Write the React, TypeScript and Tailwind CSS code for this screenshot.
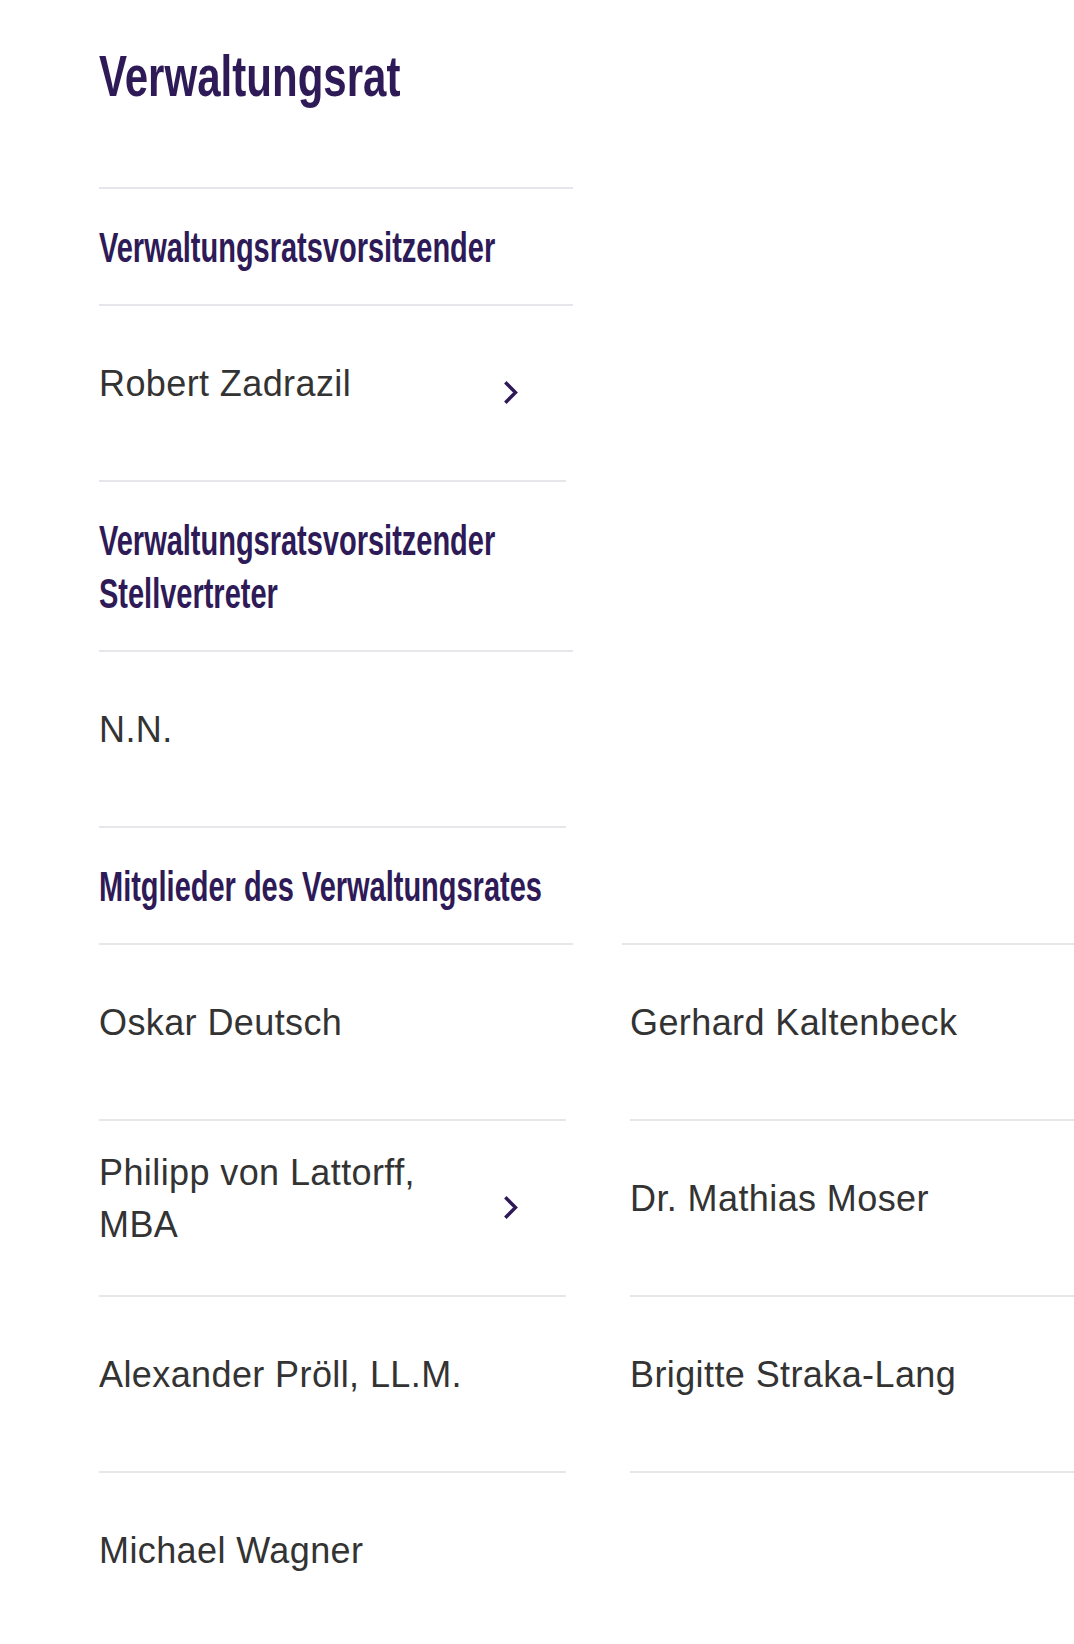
import React from "react";

type Person = { name: string; link?: boolean };

// no condensed face installed, so the bold sans is squeezed horizontally
const heading = "font-['Liberation_Sans',Arial,sans-serif] font-bold text-[#2e1a57]";

function Chevron() {
	return (
		<svg
			width="14"
			height="23"
			viewBox="0 0 14 23"
			fill="none"
			className="ml-auto mr-[48px] mt-[18px] shrink-0"
		>
			<polyline
				points="2.5,2.5 11.5,11.5 2.5,20.5"
				stroke="#2e1a57"
				strokeWidth="3.4"
				strokeLinecap="square"
				strokeLinejoin="miter"
			/>
		</svg>
	);
}

function PersonRow({ person, className = "" }: { person: Person; className?: string }) {
	return (
		<div
			className={`flex h-[176px] items-center border-b-2 border-[#e6e6eb] pb-[19px] ${className}`}
		>
			<div className="w-[372px] font-['Liberation_Sans',Arial,sans-serif] text-[36px] leading-[52px] tracking-[0.4px] text-[#333333]">
				{person.name}
			</div>
			{person.link && <Chevron />}
		</div>
	);
}

function SectionHeading({ children, top = false }: { children: React.ReactNode; top?: boolean }) {
	return (
		<h2
			className={`${heading} whitespace-nowrap pt-[32px] pb-[30px] text-[42px] leading-[53px] ${
				top ? "border-t-2 border-[#e6e6eb]" : ""
			}`}
		>
			<span className="inline-block origin-left scale-x-[0.69]">{children}</span>
		</h2>
	);
}

const members: Person[] = [
	{ name: "Oskar Deutsch" },
	{ name: "Gerhard Kaltenbeck" },
	{ name: "Philipp von Lattorff, MBA", link: true },
	{ name: "Dr. Mathias Moser" },
	{ name: "Alexander Pröll, LL.M." },
	{ name: "Brigitte Straka-Lang" },
	{ name: "Michael Wagner" },
];

export default function App() {
	return (
		<div className="min-h-screen w-full overflow-hidden bg-white">
			<div className="pl-[99px] pt-[46px]">
				<h1 className={`${heading} whitespace-nowrap text-[58px] leading-[60px]`}>
					<span className="inline-block origin-left scale-x-[0.725]">Verwaltungsrat</span>
				</h1>

				<div className="mt-[81px] w-[474px]">
					<SectionHeading top>Verwaltungsratsvorsitzender</SectionHeading>
					<div className="border-t-2 border-[#e6e6eb]">
						<PersonRow person={{ name: "Robert Zadrazil", link: true }} className="mr-[7px]" />
					</div>

					<SectionHeading>
						Verwaltungsratsvorsitzender
						<br />
						Stellvertreter
					</SectionHeading>
					<div className="border-t-2 border-[#e6e6eb]">
						<PersonRow person={{ name: "N.N." }} className="mr-[7px]" />
					</div>

					<SectionHeading>Mitglieder des Verwaltungsrates</SectionHeading>
				</div>

				<div className="grid w-[997px] grid-cols-[474px_474px] gap-x-[49px]">
					{members.map((m, i) => (
						<div
							key={m.name}
							className={i < 2 ? "border-t-2 border-[#e6e6eb]" : ""}
						>
							<PersonRow
								person={m}
								className={i % 2 === 0 ? "mr-[7px]" : "ml-[8px]"}
							/>
						</div>
					))}
				</div>
			</div>
		</div>
	);
}
